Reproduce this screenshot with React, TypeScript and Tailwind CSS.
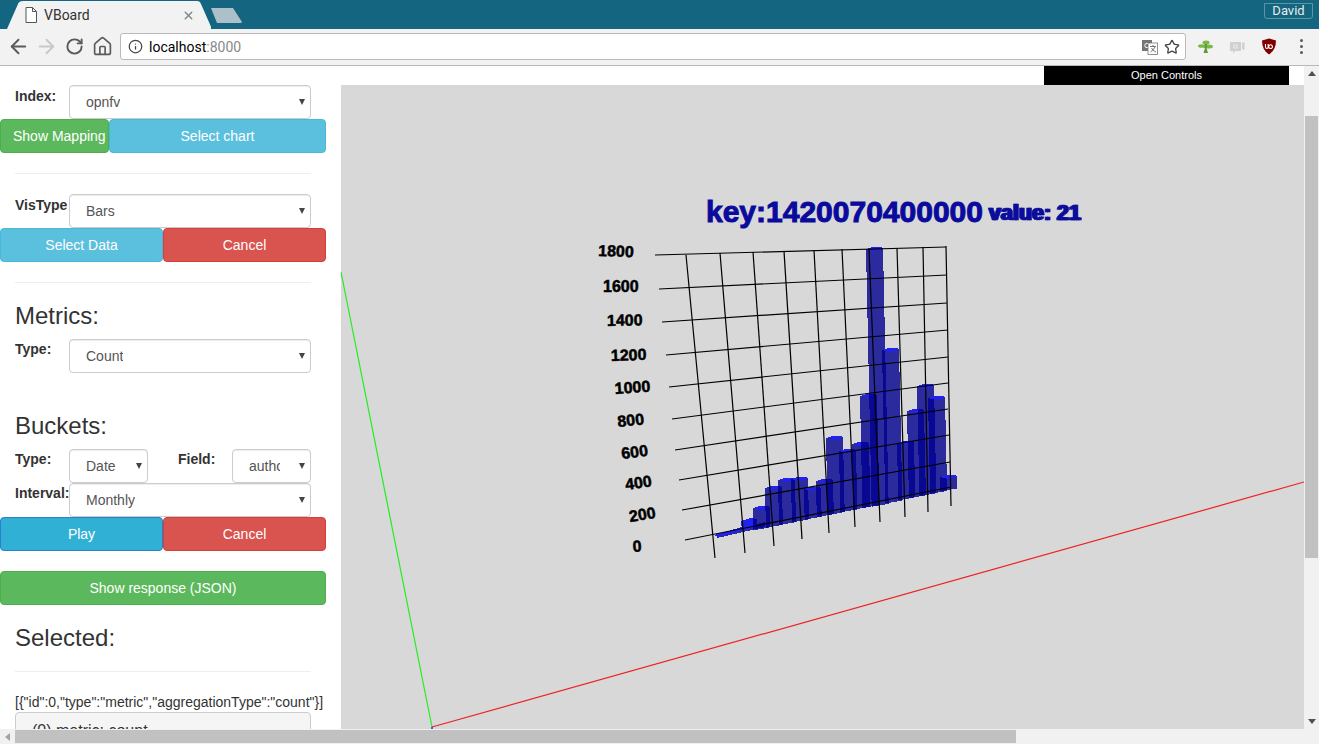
import { ArrowLeft, ArrowRight, RotateCw, Home, Info, Star, X } from 'lucide-react';

const sans = { fontFamily: '"Liberation Sans", Arial, sans-serif' };

// [x, top] of each bar, page coordinates
const BARS: [number, number][] = [
  [753, 508], [765, 488], [778, 480], [791, 479], [804, 489], [816, 481], [826, 438], [839, 451],
  [852, 444], [860, 396], [866, 249], [882, 350], [897, 443], [907, 411], [917, 386], [928, 398], [940, 477],
];

const GRID_H = [
  [655, 255, 946, 247], [659, 289, 947, 275], [662, 322, 947, 303], [666, 355, 948, 330], [669, 387, 948, 357],
  [672, 419, 948, 383], [675, 450, 948, 409], [679, 480, 949, 435], [682, 510, 950, 462], [685, 540, 951, 487],
];

const GRID_V = [
  [686, 255, 715, 558], [720, 253, 745, 553], [753, 252, 774, 546], [784, 251, 802, 539], [814, 250, 829, 533],
  [842, 249, 855, 527], [869, 249, 880, 522], [897, 248, 905, 517], [923, 247, 928, 512], [946, 246, 951, 506],
];

const LABELS: [string, number, number, number][] = [
  ['1800', 598, 256, 2], ['1600', 603, 292, 0], ['1400', 607, 326, -1], ['1200', 611, 361, -2], ['1000', 615, 394, -4],
  ['800', 618, 427, -6], ['600', 622, 459, -7], ['400', 626, 490, -8], ['200', 630, 522, -9], ['0', 633, 552, -4],
];

// the dark strips in the picture are just two translucent bars overlapping
function Bar({ x, top }: { x: number; top: number }) {
  const bottom = 538 - (x - 716) * 0.208;
  const lean = (bottom - top) * 0.022;
  const w = 17;
  return (
    <g>
      <polygon
        points={`${x},${top} ${x + w},${top - 1} ${x + w + lean},${bottom - 3} ${x + lean},${bottom}`}
        fill="#000090"
        fillOpacity="0.8"
      />
      <polygon
        points={`${x},${top} ${x + 6},${top - 2} ${x + w - 2},${top - 2} ${x + w},${top} ${x + 8},${top + 2}`}
        fill="#2222ee"
      />
    </g>
  );
}

function Chart() {
  return (
    <svg viewBox="341 85 963 644" className="block w-full h-full">
      <defs>
        <filter id="dbl" x="-5%" y="-5%" width="110%" height="110%">
          <feOffset in="SourceGraphic" dx="2" dy="0" result="o" />
          <feMerge>
            <feMergeNode in="o" />
            <feMergeNode in="SourceGraphic" />
          </feMerge>
        </filter>
      </defs>
      <line x1="341" y1="272" x2="432" y2="727" stroke="#22ee22" strokeWidth="1.2" />
      <line x1="432" y1="727" x2="1304" y2="482" stroke="#ee2222" strokeWidth="1.2" />
      <line x1="432" y1="727" x2="432" y2="729" stroke="#0000ee" strokeWidth="1.2" />

      <text x="706" y="222" fill="#0a0a9c" stroke="#0a0a9c" strokeWidth="1" fontSize="30" fontWeight="700" style={sans}>
        key:1420070400000
      </text>
      <text x="988" y="220" fill="#0a0a9c" stroke="#0a0a9c" strokeWidth="0.5" fontSize="21.5" fontWeight="700" style={sans} filter="url(#dbl)">
        value: 21
      </text>

      <g shapeRendering="crispEdges">
        {/* flat start of the series */}
        <polygon points="716,534 765,522 765,527 717,538" fill="#000090" fillOpacity="0.8" />
        <polygon points="714,535 742,527 742,531 718,537" fill="#2222ee" />
        <polygon points="741,521 750,518 757,519 757,527 742,530" fill="#2222ee" />
        {BARS.map(([x, top]) => (
          <Bar key={x} x={x} top={top} />
        ))}
      </g>

      {GRID_H.concat(GRID_V).map(([x1, y1, x2, y2]) => (
        <line key={`${x1}-${y1}`} x1={x1} y1={y1} x2={x2} y2={y2} stroke="#000" strokeWidth="1.2" />
      ))}

      {LABELS.map(([t, x, y, r]) => (
        <text
          key={t}
          x={x}
          y={y}
          fontSize="16"
          fontWeight="700"
          fill="#000"
          stroke="#000"
          strokeWidth="0.5"
          style={sans}
          transform={`rotate(${r} ${x} ${y})`}
        >
          {t}
        </text>
      ))}
    </svg>
  );
}

function Select({ value, className }: { value: string; className: string }) {
  return (
    <div className={`h-[34px] flex items-center justify-between bg-white border border-[#ccc] rounded pl-4 pr-[5px] text-sm text-[#555] overflow-hidden shadow-[inset_0_1px_1px_rgba(0,0,0,0.075)] ${className}`}>
      <span className="overflow-hidden whitespace-nowrap">{value}</span>
      <span className="ml-[11px] shrink-0 w-0 h-0 border-x-[3.5px] border-x-transparent border-t-[6px] border-t-[#444]" />
    </div>
  );
}

function Btn({ label, className }: { label: string; className: string }) {
  return (
    <div className={`h-[34px] flex items-center rounded border text-sm text-white whitespace-nowrap ${className}`}>
      {label}
    </div>
  );
}

const green = 'bg-[#5cb85c] border-[#4cae4c]';
const cyan = 'bg-[#5bc0de] border-[#46b8da]';
const red = 'bg-[#d9534f] border-[#d43f3a]';

function Sidebar() {
  return (
    <div className="w-[341px] shrink-0 h-full overflow-hidden bg-white text-[#333]" style={sans}>
      <div className="pt-[19px] w-[326px]">
        {/* Index */}
        <div className="flex pl-[15px] pr-[15px]">
          <label className="w-[54px] pt-[1px] text-sm font-bold leading-5">Index:</label>
          <Select value="opnfv" className="w-[242px]" />
        </div>
        <div className="flex">
          <Btn label="Show Mapping" className={`w-[109px] pl-3 overflow-hidden ${green}`} />
          <Btn label="Select chart" className={`w-[217px] justify-center ${cyan}`} />
        </div>
        <div className="h-px bg-[#eee] ml-[15px] w-[296px] mt-5 mb-5" />

        {/* VisType */}
        <div className="flex pl-[15px] pr-[15px]">
          <label className="w-[54px] pt-[1px] text-sm font-bold leading-5">VisType</label>
          <Select value="Bars" className="w-[242px]" />
        </div>
        <div className="flex">
          <Btn label="Select Data" className={`w-[163px] justify-center ${cyan}`} />
          <Btn label="Cancel" className={`w-[163px] justify-center ${red}`} />
        </div>
        <div className="h-px bg-[#eee] ml-[15px] w-[296px] mt-5" />

        {/* Metrics */}
        <h3 className="ml-[15px] mt-[20px] text-2xl leading-[26px] font-normal">Metrics:</h3>
        <div className="flex pl-[15px] pr-[15px] mt-[10px]">
          <label className="w-[54px] text-sm font-bold leading-5">Type:</label>
          <Select value="Count" className="w-[242px]" />
        </div>

        {/* Buckets */}
        <h3 className="ml-[15px] mt-[40px] text-2xl leading-[26px] font-normal">Buckets:</h3>
        <div className="flex pl-[15px] pr-[15px] mt-[10px]">
          <label className="w-[54px] text-sm font-bold leading-5">Type:</label>
          <Select value="Date" className="w-[79px]" />
          <label className="w-[54px] ml-[30px] text-sm font-bold leading-5">Field:</label>
          <Select value="author" className="w-[79px] [&>span:first-child]:w-[31px]" />
        </div>
        <div className="flex pl-[15px] pr-[15px]">
          <label className="w-[54px] text-sm font-bold leading-5 whitespace-nowrap">Interval:</label>
          <Select value="Monthly" className="w-[242px]" />
        </div>
        <div className="flex">
          <Btn label="Play" className="w-[163px] justify-center bg-[#31b0d5] border-[#2a7fc9]" />
          <Btn label="Cancel" className={`w-[163px] justify-center ${red}`} />
        </div>
        <Btn label="Show response (JSON)" className={`w-[326px] mt-5 justify-center ${green}`} />

        {/* Selected */}
        <h3 className="ml-[15px] mt-[20px] text-2xl leading-[26px] font-normal">Selected:</h3>
        <div className="h-px bg-[#eee] ml-[15px] w-[296px] mt-[20px]" />
        <div className="ml-[15px] mt-[20px] text-sm leading-5 whitespace-nowrap">
          {'[{"id":0,"type":"metric","aggregationType":"count"}]'}
        </div>
        <div className="ml-[15px] w-[296px] h-[60px] bg-[#f5f5f5] border border-[#ccc] rounded pt-[6px] pl-[16px] text-base">
          (0) metric: count
        </div>
      </div>
    </div>
  );
}

function NavBtn({ children }: { children: React.ReactNode }) {
  return <div className="w-[28px] flex justify-center">{children}</div>;
}

function BrowserChrome() {
  return (
    <div className="shrink-0" style={{ fontFamily: 'Roboto, "Noto Sans", sans-serif' }}>
      {/* tab strip */}
      <div className="h-[29px] bg-[#14657f] flex items-end justify-between pl-[7px] pr-[6px]">
        <div className="flex items-end">
          <div className="relative w-[204px] h-[28px] flex items-center pl-[18px] pr-[16px]">
            <svg viewBox="0 0 204 28" className="absolute inset-0 w-full h-full">
              <path d="M0 28 L11 3 Q12 0 16 0 L190 0 Q193 0 194 3 L205 28 Z" fill="#f2f2f2" />
            </svg>
            <svg viewBox="0 0 12 16" className="relative w-[12px] h-[16px]">
              <path d="M1 .5 H7.5 L11.5 4.5 V15.5 H1 Z M7.5 .5 V4.5 H11.5" fill="#fff" stroke="#555" strokeWidth="1" />
            </svg>
            <span className="relative ml-[7px] text-sm text-[#333]">VBoard</span>
            <X size={13} strokeWidth={2.5} className="relative ml-auto text-[#7a8a8a]" />
          </div>
          <svg viewBox="0 0 32 15" className="w-[32px] h-[15px] mb-[6px] ml-[-1px]">
            <path d="M1 0 H23 L32 14 Q32 15 30 15 H7 Z" fill="#adc0c9" />
          </svg>
        </div>
        <div className="mb-[10px] w-[49px] h-[16px] flex items-center justify-center border border-[#5d95a8] rounded-b-[3px] text-[13px] text-[#e4ecef]">
          David
        </div>
      </div>
      {/* toolbar */}
      <div className="h-[37px] bg-[#f2f2f2] border-b border-[#b8b8b8] flex items-center pl-[4px] pb-[1px]">
        <NavBtn><ArrowLeft size={23} strokeWidth={2} className="text-[#5a5a5a]" /></NavBtn>
        <NavBtn><ArrowRight size={23} strokeWidth={2} className="text-[#c8c8c8]" /></NavBtn>
        <NavBtn><RotateCw size={19} strokeWidth={2.4} className="text-[#5a5a5a]" /></NavBtn>
        <NavBtn><Home size={21} strokeWidth={1.9} className="text-[#5a5a5a]" /></NavBtn>
        <div className="ml-[4px] w-[1066px] h-[27px] bg-white border border-[#b9b9b9] rounded-[3px] flex items-center pl-[7px] pr-[5px]">
          <Info size={15} strokeWidth={2} className="text-[#444]" />
          <span className="ml-[6px] text-sm text-black">
            localhost<span className="text-[#888]">:8000</span>
          </span>
          <svg viewBox="0 0 16 16" className="ml-auto w-[16px] h-[16px]">
            <rect x="0" y="1" width="10" height="11" fill="#757575" />
            <circle cx="5" cy="6.5" r="2.2" fill="none" stroke="#fff" strokeWidth="1" />
            <rect x="6" y="4" width="9.5" height="11.5" fill="#fff" stroke="#757575" strokeWidth="0.8" />
            <path d="M8 7.5 H14 M11 6 V7.5 M13 8 Q11.5 11 8.5 13 M9.5 9 Q11 12 14 13" stroke="#666" strokeWidth="0.9" fill="none" />
          </svg>
          <Star size={16} strokeWidth={2} className="ml-[6px] text-[#444]" />
        </div>
        <svg viewBox="0 0 15 14" className="ml-[12px] w-[15px] h-[14px]">
          <ellipse cx="8" cy="2.5" rx="3.5" ry="2" fill="#7ab648" />
          <ellipse cx="3.5" cy="6" rx="3.5" ry="1.8" fill="#7ab648" />
          <ellipse cx="10" cy="6.5" rx="5" ry="2" fill="#7ab648" />
          <path d="M6.5 4 H9 L8.5 8 L10 13 H5.5 L7 8 Z" fill="#5f9a36" />
        </svg>
        <svg viewBox="0 0 16 16" className="ml-[16px] w-[16px] h-[16px]">
          <path d="M1 3 H12 V12 H6 L4 15 V12 H1 Z M13 4 L15.5 3 V11 L13 10 Z" fill="#d0d0d0" />
          <circle cx="6.5" cy="7.5" r="1.8" fill="none" stroke="#f2f2f2" strokeWidth="1" />
        </svg>
        <svg viewBox="0 0 16 17" className="ml-[16px] w-[16px] h-[17px]">
          <path d="M8 0.5 L15 2.5 Q15 12 8 16.5 Q1 12 1 2.5 Z" fill="#800000" />
          <path d="M4.5 6 V9 Q4.5 10.5 6 10.5 Q7.2 10.5 7.2 9 V6 M11.5 8.5 A1.9 1.9 0 1 1 11.49 8.4" stroke="#fff" strokeWidth="1.1" fill="none" />
        </svg>
        <div className="ml-[23px] flex flex-col gap-[3px]">
          <span className="w-[3px] h-[3px] rounded-full bg-[#5a5a5a]" />
          <span className="w-[3px] h-[3px] rounded-full bg-[#5a5a5a]" />
          <span className="w-[3px] h-[3px] rounded-full bg-[#5a5a5a]" />
        </div>
      </div>
    </div>
  );
}

export default function App() {
  return (
    <div className="w-[1319px] h-[744px] flex flex-col overflow-hidden bg-white">
      <BrowserChrome />
      <div className="flex-1 min-h-0 flex">
        {/* page */}
        <div className="w-[1304px] flex flex-col">
          <div className="flex-1 min-h-0 flex">
            <Sidebar />
            <div className="flex-1 flex flex-col">
              <div className="h-[19px] shrink-0 flex justify-end pr-[15px]">
                <div className="w-[245px] h-full bg-black text-white text-[11px] flex items-center justify-center" style={sans}>
                  Open Controls
                </div>
              </div>
              <div className="flex-1 min-h-0 bg-[#d8d8d8]">
                <Chart />
              </div>
            </div>
          </div>
          {/* horizontal scrollbar */}
          <div className="h-[15px] shrink-0 bg-[#f1f1f1] flex items-center">
            <div className="w-[15px] flex justify-center">
              <span className="w-0 h-0 border-y-[4px] border-y-transparent border-r-[5px] border-r-[#a3a3a3]" />
            </div>
            <div className="w-[1001px] h-[13px] bg-[#c1c1c1]" />
          </div>
        </div>
        {/* vertical scrollbar */}
        <div className="w-[15px] shrink-0 bg-[#f1f1f1] flex flex-col items-center pb-[15px]">
          <div className="h-[15px] flex items-center justify-center">
            <span className="w-0 h-0 border-x-[4px] border-x-transparent border-b-[5px] border-b-[#505050]" />
          </div>
          <div className="mt-[35px] w-[13px] h-[442px] bg-[#c1c1c1]" />
          <div className="mt-auto h-[15px] flex items-center justify-center">
            <span className="w-0 h-0 border-x-[4px] border-x-transparent border-t-[5px] border-t-[#505050]" />
          </div>
        </div>
      </div>
    </div>
  );
}
